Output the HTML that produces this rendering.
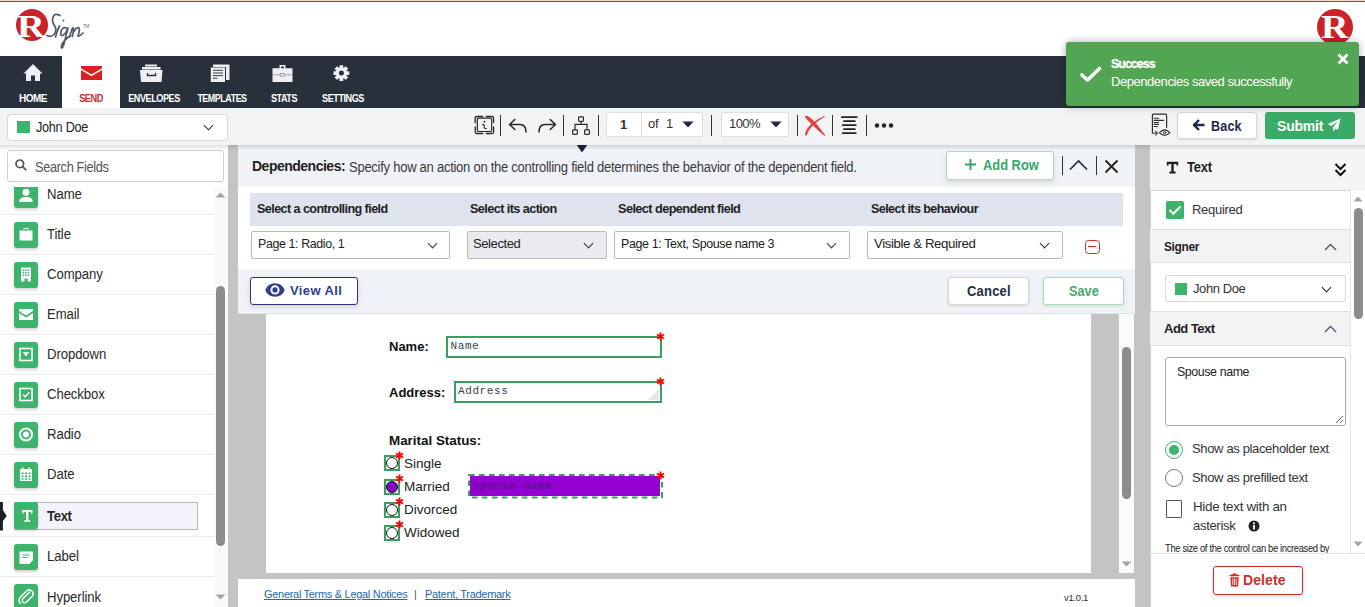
<!DOCTYPE html>
<html><head><meta charset="utf-8">
<style>
*{box-sizing:border-box;margin:0;padding:0}
html,body{width:1365px;height:607px;overflow:hidden;background:#fff;font-family:"Liberation Sans",sans-serif;color:#222}
.a{position:absolute}
.t{position:absolute;white-space:nowrap;line-height:1;transform-origin:0 0}
#nav{left:0;top:56px;width:1365px;height:52px;background:#28303b}
.nl{position:absolute;top:37.5px;color:#fff;font-size:10px;font-weight:bold;line-height:10px;white-space:nowrap;letter-spacing:-0.5px}
.sep{position:absolute;width:1px;background:#333;top:115px;height:21px}
.li{position:absolute;left:0;width:214px;height:40px;border-bottom:1px solid #ebebeb}
.li .ic{position:absolute;left:14px;top:7px;width:24px;height:26px;background:#3db36b;border-radius:3px;box-shadow:0 2px 3px rgba(0,0,0,.18)}
.li .ic svg{position:absolute;left:0;top:0}
.li .lb{position:absolute;left:47px;top:10.5px;font-size:14px;color:#2a2a2a;line-height:16px;letter-spacing:-0.1px;transform-origin:0 0;transform:scaleX(0.94);white-space:nowrap}
.sel{position:absolute;background:#fff;border:1px solid #b9b9b9;border-radius:2px}
.sel .tx{position:absolute;left:6px;top:5px;font-size:13px;color:#222;line-height:14px;white-space:nowrap;letter-spacing:-0.4px;transform-origin:0 0}
.chev{position:absolute;width:7px;height:7px;border-right:1.5px solid #333;border-bottom:1.5px solid #333;transform:rotate(45deg)}
.hdr{position:absolute;transform-origin:0 0;top:193px;height:33px;font-size:13px;font-weight:bold;color:#222;line-height:14px;padding-top:9px;white-space:nowrap;letter-spacing:-0.6px}
.btn{position:absolute;background:#fff;border-radius:3px;font-weight:bold;text-align:center;white-space:nowrap}
.ast{position:absolute;color:#f00;font-size:14px;font-weight:bold;line-height:10px;font-family:"Liberation Sans",sans-serif}
.rb{position:absolute;left:384px;width:16px;height:16px;border:2px solid #3c9f62}
.rb i{position:absolute;left:0px;top:0px;width:12px;height:12px;border:1.3px solid #111;border-radius:50%;background:#fff}
.rl{position:absolute;margin-top:-0.5px;left:404px;font-size:13px;color:#222;line-height:14px;font-family:"Liberation Sans",sans-serif;transform-origin:0 0;transform:scaleX(1.04)}
</style></head><body>
<div class="a" style="left:0;top:0;width:1365px;height:1px;background:#f4d3d3"></div>
<div class="a" style="left:0;top:1px;width:1365px;height:1px;background:#b23a3a"></div>
<!-- logo -->
<div class="a" style="left:16px;top:9px;width:32px;height:32px;border-radius:50%;background:#cc2229"></div>
<div class="t" id="logoR" style="left:17px;top:11px;font-family:'Liberation Serif',serif;font-weight:bold;font-size:31px;color:#fff;line-height:31px;transform:scaleX(1.24);transform-origin:0 0">R</div>
<svg class="a" style="left:0;top:0" width="100" height="55" viewBox="0 0 100 55" fill="none" stroke="#525b68" stroke-width="1.7" stroke-linecap="round" stroke-linejoin="round">
<path d="M60 15.5 Q55 12.5 53 17 Q51.5 21 54.5 25.5 Q57.5 30.5 54 34.5 Q51 37.5 47 35.5"/>
<path d="M55.5 37 Q57 31 59.5 26"/>
<circle cx="63.5" cy="20.5" r="0.9" fill="#525b68" stroke="none"/>
<path d="M66.5 28 Q62 26.5 60.8 32.5 Q60.3 37 63.5 35 Q66.5 32.5 68 28 L63.5 45.5 Q62 49.5 61.2 47 Q61.5 42 70.5 35.5"/>
<path d="M69.5 37 Q71 32 72.5 28 Q74 27.5 73.6 30 L72.3 36.5 M73.3 32.5 Q76.5 27 78.8 27.8 Q80 28.5 79 32 L78 36 Q79 37 83 33"/>
</svg>
<div class="t" style="left:83px;top:24.5px;font-size:4.5px;color:#666;letter-spacing:-0.2px">TM</div>
<div class="a" style="left:1317px;top:9px;width:36px;height:36px;border-radius:50%;background:#cc2229"></div>
<div class="t" style="left:1321px;top:12px;font-family:'Liberation Serif',serif;font-weight:bold;font-size:33px;color:#fff;line-height:31px;transform:scaleX(1.15)">R</div>

<div id="nav" class="a">
 <div class="a" style="left:62px;top:0;width:58px;height:52px;background:#fff"></div>
 <svg class="a" style="left:23px;top:8px" width="20" height="18" viewBox="0 0 20 18"><path d="M10 0 L0.5 9.5 H3 V17 H8 V11.5 H12 V17 H17 V9.5 H19.5 Z" fill="#eef0f4"/></svg>
 <svg class="a" style="left:81px;top:10px" width="21" height="14" viewBox="0 0 21 14"><path d="M0 0 H21 V2.2 L10.5 8.5 L0 2.2 Z M0 4 L10.5 10.3 L21 4 V14 H0 Z" fill="#d9211f"/></svg>
 <svg class="a" style="left:140px;top:8px" width="23" height="18" viewBox="0 0 23 18"><path d="M5 0.5 H17 V2.5 H5 Z M2 3 H20.5 V5.5 H2 Z M0 6 H22.5 L21.5 18 H1 Z" fill="#eef0f4"/><path d="M7.5 9 V11.5 H15.5 V9" stroke="#28303b" stroke-width="1.4" fill="none"/></svg>
 <svg class="a" style="left:210px;top:8px" width="20" height="18" viewBox="0 0 20 18"><path d="M3 0.5 H19.5 V16 H16 V3 H3 Z" fill="#eef0f4"/><path d="M0.8 3.5 H15 V18 H0.8 Z" fill="#eef0f4"/><path d="M3 6.3 H13 M3 9 H13 M3 11.6 H13 M3 14.2 H7.5" stroke="#28303b" stroke-width="0.9"/></svg>
 <svg class="a" style="left:272px;top:9px" width="21" height="17" viewBox="0 0 21 17"><path d="M7.5 0 H13.5 V3.3 H12 V1.5 H9 V3.3 H7.5 Z M0.5 3.3 H20.5 V17 H0.5 Z" fill="#eef0f4"/><path d="M0.5 9.8 H8.6 M12.4 9.8 H20.5" stroke="#8a9099" stroke-width="0.8"/><rect x="8.6" y="8.6" width="3.8" height="2.6" fill="none" stroke="#8a9099" stroke-width="0.8"/></svg>
 <svg class="a" style="left:333px;top:9px" width="17" height="17" viewBox="0 0 17 17"><g transform="translate(8.4 8.1)" fill="#eef0f4"><circle r="5.6"/><rect x="-1.9" y="-7.9" width="3.8" height="15.8" rx="0.6"/><rect x="-1.9" y="-7.9" width="3.8" height="15.8" rx="0.6" transform="rotate(45)"/><rect x="-1.9" y="-7.9" width="3.8" height="15.8" rx="0.6" transform="rotate(90)"/><rect x="-1.9" y="-7.9" width="3.8" height="15.8" rx="0.6" transform="rotate(135)"/></g><circle cx="8.4" cy="8.1" r="2.5" fill="#28303b"/></svg>
 <div class="nl" style="left:33px;transform:translateX(-50%) scaleX(1.0)">HOME</div>
 <div class="nl" style="left:90.6px;color:#c9302c;transform:translateX(-50%) scaleX(0.92)">SEND</div>
 <div class="nl" style="left:153.5px;transform:translateX(-50%) scaleX(0.91)">ENVELOPES</div>
 <div class="nl" style="left:221.7px;transform:translateX(-50%) scaleX(0.89)">TEMPLATES</div>
 <div class="nl" style="left:284.4px;transform:translateX(-50%) scaleX(0.9)">STATS</div>
 <div class="nl" style="left:343.2px;transform:translateX(-50%) scaleX(0.91)">SETTINGS</div>
</div>

<!-- toolbar -->
<div class="a" style="left:0;top:108px;width:1365px;height:37px;background:#f2f3f4"></div>
<div class="sel" style="left:7px;top:113.5px;width:221px;height:27px;border:1.5px solid #d8d8d8;border-radius:4px">
 <div class="a" style="left:9px;top:6.5px;width:13px;height:12px;background:#3db36b"></div>
 <div class="t" style="left:28px;top:5.5px;font-size:14px;color:#222;letter-spacing:-0.3px;transform:scaleX(0.905)">John Doe</div>
 <div class="chev" style="left:197px;top:7px"></div>
</div>

<!-- toolbar icons -->
<svg class="a" style="left:470px;top:112px" width="30" height="26" viewBox="0 0 30 26" fill="none" stroke="#262626" stroke-width="1.3" stroke-linecap="round"><path d="M5.2 10.7 V6 Q5.2 4.5 6.7 4.5 H12.7 M16.3 4.5 H22.1 Q23.6 4.5 23.6 6 V10.5 M5.2 14.8 V20 Q5.2 21.5 6.7 21.5 H12.7 M16.3 21.5 H22.1 Q23.6 21.5 23.6 20 V14.8"/><rect x="7.3" y="6.2" width="14.4" height="13.3" rx="1.6" stroke-width="1.2"/><circle cx="14.5" cy="9.7" r="0.9" fill="#262626" stroke="none"/><path d="M12.5 12.6 Q14.1 12.3 14.2 13.6 V15.4 Q14.4 16.8 16.4 16.5" stroke-width="1.1"/></svg>
<div class="sep" style="left:500px"></div>
<svg class="a" style="left:508px;top:118px" width="21" height="16" viewBox="0 0 21 16" fill="none" stroke="#2a2a2a" stroke-width="1.6" stroke-linecap="round" stroke-linejoin="round"><path d="M6.8 1.5 L1.5 6.5 L6.8 11.5 M1.5 6.5 H12 Q18 6.5 18 14"/></svg>
<svg class="a" style="left:537px;top:118px" width="21" height="16" viewBox="0 0 21 16" fill="none" stroke="#2a2a2a" stroke-width="1.6" stroke-linecap="round" stroke-linejoin="round"><path d="M13.2 1.5 L18.5 6.5 L13.2 11.5 M18.5 6.5 H8 Q2 6.5 2 14"/></svg>
<div class="sep" style="left:563px"></div>
<svg class="a" style="left:571px;top:115px" width="20" height="21" viewBox="0 0 20 21" fill="none" stroke="#2a2a2a" stroke-width="1.2"><rect x="7.6" y="1.8" width="4.8" height="4.6" rx="0.8"/><rect x="1.6" y="14.8" width="4.8" height="4.6" rx="0.8"/><rect x="13.6" y="14.8" width="4.8" height="4.6" rx="0.8"/><path d="M10 6.4 V9.3 M4 14.8 V9.3 H16 V14.8"/></svg>
<div class="sep" style="left:598px"></div>
<div class="a" style="left:606px;top:112px;width:97px;height:25px;background:#fff;border:1px solid #dedede;border-radius:2px"></div>
<div class="a" style="left:641px;top:113px;width:1px;height:23px;background:#dedede"></div>
<div class="t" style="left:620px;top:118px;font-size:13px;font-weight:bold;color:#333">1</div>
<div class="t" style="left:648px;top:117px;font-size:13px;color:#333;letter-spacing:-0.3px">of</div><div class="t" style="left:666px;top:117px;font-size:13px;color:#333">1</div>
<svg class="a" style="left:682px;top:121px" width="12" height="7" viewBox="0 0 12 7"><path d="M0.5 0.5 H11.5 L6 6.5 Z" fill="#1e2540"/></svg>
<div class="sep" style="left:711px"></div>
<div class="a" style="left:721px;top:112px;width:68px;height:25px;background:#fff;border:1px solid #dedede;border-radius:2px"></div>
<div class="t" style="left:729px;top:117px;font-size:13px;color:#333;letter-spacing:-0.6px">100%</div>
<svg class="a" style="left:770px;top:121px" width="12" height="7" viewBox="0 0 12 7"><path d="M0.5 0.5 H11.5 L6 6.5 Z" fill="#1e2540"/></svg>
<div class="sep" style="left:797px"></div>
<svg class="a" style="left:800px;top:110px" width="30" height="30" viewBox="0 0 30 30" fill="#e04545"><path d="M5 7.2 Q4.6 5.2 7.2 5.8 Q13 9 17.8 15.5 L25.3 25.3 L24.6 26 Q18 20.5 12.8 15.2 Q7.8 11 5 7.2 Z"/><path d="M24.6 5.8 Q25.3 6.4 24.2 7.1 Q17.5 11 12.5 16 Q8 21 7 25 Q5.8 26.8 5 24.6 Q5.6 19.5 10.8 14.5 Q16.8 9.3 24.6 5.8 Z"/></svg>
<div class="sep" style="left:832px"></div>
<svg class="a" style="left:840px;top:115px" width="18" height="20" viewBox="0 0 18 20" stroke="#222" stroke-width="1.7" stroke-linecap="round"><path d="M1.8 2.2 H16.8 M4 6.2 H14.8 M2.8 10.2 H15.8 M4 14.2 H14.8 M2.8 18.2 H15.8"/></svg>
<div class="sep" style="left:866px"></div>
<svg class="a" style="left:874px;top:122px" width="20" height="7" viewBox="0 0 20 7" fill="#222"><circle cx="3" cy="3.5" r="2.2"/><circle cx="10" cy="3.5" r="2.2"/><circle cx="17" cy="3.5" r="2.2"/></svg>

<!-- right toolbar -->
<svg class="a" style="left:1150px;top:112px" width="24" height="26" viewBox="0 0 24 26" fill="none" stroke="#2e2e2e" stroke-width="1.2" stroke-linecap="round"><path d="M2.4 21.2 V3.5 Q2.4 2.2 3.7 2.2 H15.3 Q16.6 2.2 16.6 3.5 V15.4"/><path d="M2.4 21.2 H7.3 M5.6 19.3 L7.6 21.2 L5.6 23.1" stroke="#555"/><path d="M4.2 6.3 H8.6 M4.2 8.4 H13.6 M4.2 10.5 H8.6 M4.2 12.4 H8.6 M4.2 14.5 H7.3" stroke-width="1.1"/><path d="M9.4 20.7 Q14.6 15 19.8 20.7 Q14.6 26.4 9.4 20.7 Z" stroke-width="1.1"/><circle cx="14.6" cy="20.7" r="1.2" stroke-width="1"/></svg>
<div class="btn" style="left:1177px;top:112px;width:80px;height:27px;border:1px solid #d6d6d6;box-shadow:0 1px 2px rgba(0,0,0,.1)"></div>
<svg class="a" style="left:1193px;top:119px" width="12" height="12" viewBox="0 0 12 12"><path d="M6 1 L1 6 L6 11 M1.5 6 H11.5" stroke="#1e2a45" stroke-width="2.4" fill="none"/></svg>
<div class="t" style="left:1211px;top:117px;font-size:15px;font-weight:bold;color:#1e2a45;letter-spacing:0.2px;transform:scaleX(0.84);margin-top:0.5px">Back</div>
<div class="btn" style="left:1265px;top:112px;width:90px;height:27px;background:#3aab67"></div>
<div class="t" style="left:1277px;top:118px;font-size:14px;font-weight:bold;color:#fff;letter-spacing:-0.2px;margin-top:1px">Submit</div>
<svg class="a" style="left:1327px;top:118px" width="14" height="14" viewBox="0 0 14 14"><path d="M13.5 0.5 L0.5 6 L4.5 8 L11 3 L6 9.5 L6 13.5 L8.5 10.5 L11 12 Z" fill="#fff"/></svg>

<!-- left panel -->
<div class="a" style="left:0;top:145px;width:228px;height:462px;background:#fff"></div>
<div class="a" style="left:7px;top:150px;width:217px;height:32px;border:1px solid #cfcfcf;border-radius:3px;background:#fff"></div>
<svg class="a" style="left:15px;top:159px" width="12" height="12" viewBox="0 0 12 12" fill="none" stroke="#555" stroke-width="1.7"><circle cx="4.8" cy="4.8" r="3.8"/><path d="M7.6 7.6 L11.2 11.2"/></svg>
<div class="t" style="left:35px;top:159.5px;font-size:14px;color:#555;letter-spacing:-0.4px;transform:scaleX(0.915)">Search Fields</div>
<div class="a" style="left:0;top:187px;width:228px;height:420px;overflow:hidden">
 <div class="a" style="left:0;top:-12px;width:228px;height:450px">
  <div class="li" style="top:0"><div class="ic"><svg width="24" height="25" viewBox="0 0 24 25" fill="#fff"><circle cx="12" cy="10.3" r="3.5"/><path d="M5.2 20 Q5.2 15 12 15 Q18.8 15 18.8 20 Z"/></svg></div><div class="lb">Name</div></div>
  <div class="li" style="top:40px"><div class="ic"><svg width="24" height="25" viewBox="0 0 24 25" fill="#fff"><path d="M9.5 7.5 V6 H14.5 V7.5 H13.5 V7 H10.5 V7.5 Z M5.5 8.5 H18.5 V18.5 H5.5 Z"/></svg></div><div class="lb">Title</div></div>
  <div class="li" style="top:80px"><div class="ic"><svg width="24" height="25" viewBox="0 0 24 25" fill="#fff"><path d="M7 5.5 H17 V19.5 H13.5 V16.5 H10.5 V19.5 H7 Z"/><g fill="#3db36b"><rect x="8.7" y="7.5" width="1.5" height="1.5"/><rect x="11.2" y="7.5" width="1.5" height="1.5"/><rect x="13.7" y="7.5" width="1.5" height="1.5"/><rect x="8.7" y="10" width="1.5" height="1.5"/><rect x="11.2" y="10" width="1.5" height="1.5"/><rect x="13.7" y="10" width="1.5" height="1.5"/><rect x="8.7" y="12.5" width="1.5" height="1.5"/><rect x="11.2" y="12.5" width="1.5" height="1.5"/><rect x="13.7" y="12.5" width="1.5" height="1.5"/></g></svg></div><div class="lb">Company</div></div>
  <div class="li" style="top:120px"><div class="ic"><svg width="24" height="25" viewBox="0 0 24 25" fill="#fff"><path d="M5 7 H19 V9 L12 13.5 L5 9 Z M5 11 L12 15.5 L19 11 V18 H5 Z"/></svg></div><div class="lb">Email</div></div>
  <div class="li" style="top:160px"><div class="ic"><svg width="24" height="25" viewBox="0 0 24 25" fill="none" stroke="#fff" stroke-width="1.6"><rect x="6" y="6.5" width="12" height="12"/><path d="M9.5 10.5 H14.5 L12 14 Z" fill="#fff" stroke-width="0.8"/></svg></div><div class="lb">Dropdown</div></div>
  <div class="li" style="top:200px"><div class="ic"><svg width="24" height="25" viewBox="0 0 24 25" fill="none" stroke="#fff" stroke-width="1.6"><rect x="6" y="6.5" width="12" height="12"/><path d="M9 12.5 L11.3 14.8 L15.2 10.2"/></svg></div><div class="lb">Checkbox</div></div>
  <div class="li" style="top:240px"><div class="ic"><svg width="24" height="25" viewBox="0 0 24 25"><circle cx="12" cy="12.5" r="6" fill="none" stroke="#fff" stroke-width="2"/><circle cx="12" cy="12.5" r="3" fill="#fff"/></svg></div><div class="lb">Radio</div></div>
  <div class="li" style="top:280px"><div class="ic"><svg width="24" height="25" viewBox="0 0 24 25" fill="#fff"><path d="M6 7 H18 V19 H6 Z"/><g fill="#3db36b"><rect x="7.5" y="10.5" width="2" height="1.7"/><rect x="11" y="10.5" width="2" height="1.7"/><rect x="14.5" y="10.5" width="2" height="1.7"/><rect x="7.5" y="13.5" width="2" height="1.7"/><rect x="11" y="13.5" width="2" height="1.7"/><rect x="14.5" y="13.5" width="2" height="1.7"/><rect x="7.5" y="16.3" width="2" height="1.5"/><rect x="11" y="16.3" width="2" height="1.5"/><rect x="14.5" y="16.3" width="2" height="1.5"/></g><rect x="8" y="5.5" width="1.5" height="2.5"/><rect x="14.5" y="5.5" width="1.5" height="2.5"/></svg></div><div class="lb">Date</div></div>
  <div class="li" style="top:320px;height:42px">
   <div class="a" style="left:14px;top:7px;width:184px;height:28px;background:#f3f4fb;border:1px solid #b9b9b9"></div>
   <svg class="a" style="left:0;top:7px" width="8" height="29" viewBox="0 0 8 29"><path d="M0 0 H2.9 V8 L6.7 14 L2.9 19 V28.6 H0 Z" fill="#1c1f26"/></svg>
   <div class="ic" style="top:7px;height:27px"><svg width="24" height="27" viewBox="0 0 24 27"><path d="M8 8 H18.5 V11.5 H17 V9.8 H14.4 V18.3 H16.2 V19.8 H10.3 V18.3 H12.1 V9.8 H9.5 V11.5 H8 Z" fill="#fff"/></svg></div><div class="lb" style="font-weight:bold;top:13px;letter-spacing:-0.4px">Text</div></div>
  <div class="li" style="top:362px;height:40px"><div class="ic" style="top:7px"><svg width="24" height="26" viewBox="0 0 24 26" fill="#fff"><path d="M5.5 7.5 H19 V16 L15.5 20 H6.5 Q5.5 20 5.5 19 Z"/><path d="M8.5 11 H16 M8.5 13.5 H13.5" stroke="#3db36b" stroke-width="1.1"/></svg></div><div class="lb" style="top:11px">Label</div></div>
  <div class="li" style="top:402px"><div class="ic" style="top:7px"><svg width="24" height="25" viewBox="0 0 24 25" fill="none" stroke="#fff" stroke-width="1.5" stroke-linecap="round"><path d="M15.5 8 L9 14.5 Q7.5 16.5 9 18 Q10.5 19.5 12.5 18 L18 12.5 Q20.5 9.5 18 7 Q15.5 4.5 12.5 7 L6.5 13 Q3.5 16.5 6.5 19.5"/></svg></div><div class="lb" style="top:11.5px">Hyperlink</div></div>
 </div>
</div>
<div class="a" style="left:214px;top:187px;width:14px;height:420px;background:#fafafa"></div>
<svg class="a" style="left:215px;top:192px" width="11" height="6" viewBox="0 0 11 6"><path d="M0.5 5.5 L5.5 0.5 L10.5 5.5 Z" fill="#a3a3a3"/></svg>
<div class="a" style="left:216px;top:286px;width:9px;height:260px;background:#8c8c8c;border-radius:5px"></div>
<svg class="a" style="left:215px;top:594px" width="11" height="6" viewBox="0 0 11 6"><path d="M0.5 0.5 L10.5 0.5 L5.5 5.5 Z" fill="#a3a3a3"/></svg>

<!-- center gray -->
<div class="a" style="left:228px;top:145px;width:922px;height:462px;background:#c4c4c4"></div>
<!-- dependencies panel -->
<div class="a" style="left:238px;top:145px;width:897px;height:169px;background:#eff3f7;border-bottom:1px solid #dfe3ea"></div>
<svg class="a" style="left:576px;top:145px" width="12" height="8" viewBox="0 0 12 8"><path d="M0.8 0 H11.2 L6 7.6 Z" fill="#17203d"/></svg>
<div class="t" style="left:252px;top:159px;font-size:14px;font-weight:bold;color:#222;letter-spacing:-0.5px">Dependencies:</div>
<div class="t" style="left:349px;top:159.5px;font-size:14px;color:#3a3a3a;letter-spacing:-0.28px;transform:scaleX(0.929)">Specify how an action on the controlling field determines the behavior of the dependent field.</div>
<div class="btn" style="left:946px;top:151px;width:108px;height:29px;border:1px solid #a9dbbd;box-shadow:0 2px 4px rgba(0,0,0,.12)"></div>
<svg class="a" style="left:964px;top:158px" width="13" height="13" viewBox="0 0 13 13"><path d="M6.5 1 V12 M1 6.5 H12" stroke="#3aa76d" stroke-width="2"/></svg>
<div class="t" style="left:983px;top:158px;font-size:14px;font-weight:bold;color:#3aa76d;letter-spacing:0px;transform:scaleX(0.92)">Add Row</div>
<div class="a" style="left:1062px;top:156px;width:1px;height:19px;background:#333"></div>
<svg class="a" style="left:1069px;top:159px" width="19" height="12" viewBox="0 0 19 12"><path d="M1 10.5 L9.5 2 L18 10.5" stroke="#1e2a45" stroke-width="1.6" fill="none"/></svg>
<div class="a" style="left:1096px;top:156px;width:1px;height:19px;background:#333"></div>
<svg class="a" style="left:1104px;top:159px" width="15" height="15" viewBox="0 0 15 15"><path d="M1.5 1.5 L13.5 13.5 M13.5 1.5 L1.5 13.5" stroke="#222" stroke-width="1.8"/></svg>
<div class="a" style="left:238px;top:187px;width:897px;height:82px;background:#fff"></div>
<div class="a" style="left:250px;top:193px;width:873px;height:33px;background:#dfe3ee"></div>
<div class="hdr" style="left:257px;transform:scaleX(0.97)">Select a controlling field</div>
<div class="hdr" style="left:470px;transform:scaleX(0.975)">Select its action</div>
<div class="hdr" style="left:618px;transform:scaleX(0.98)">Select dependent field</div>
<div class="hdr" style="left:871px;transform:scaleX(0.965)">Select its behaviour</div>
<div class="sel" style="left:251px;top:231px;width:199px;height:28px"><div class="tx" style="transform:scaleX(0.955)">Page 1: Radio, 1</div><div class="chev" style="left:177px;top:8px"></div></div>
<div class="sel" style="left:467px;top:231px;width:140px;height:28px;background:#e9ebee"><div class="tx" style="left:5px">Selected</div><div class="chev" style="left:117px;top:8px"></div></div>
<div class="sel" style="left:614px;top:231px;width:236px;height:28px"><div class="tx" style="transform:scaleX(0.96)">Page 1: Text, Spouse name 3</div><div class="chev" style="left:213px;top:8px"></div></div>
<div class="sel" style="left:867px;top:231px;width:196px;height:28px"><div class="tx" style="transform:scaleX(1.02)">Visible &amp; Required</div><div class="chev" style="left:173px;top:8px"></div></div>
<div class="a" style="left:1085px;top:240px;width:15px;height:14px;border:1.6px solid #c9302c;border-radius:3.5px"><div class="a" style="left:2.2px;top:4.6px;width:7.4px;height:1.8px;background:#c9302c"></div></div>
<div class="btn" style="left:250px;top:277px;width:108px;height:28px;border:1.5px solid #2b3577;box-shadow:0 2px 5px rgba(0,0,0,.12)"></div>
<svg class="a" style="left:265.3px;top:283px" width="20" height="14" viewBox="0 0 20 14"><path d="M0.3 7 Q2.8 0.2 10 0.2 Q17.2 0.2 19.7 7 Q17.2 13.8 10 13.8 Q2.8 13.8 0.3 7 Z" fill="#2f3d8f"/><circle cx="10" cy="6.9" r="4.6" fill="#fff"/><circle cx="10" cy="6.9" r="2.6" fill="#2f3d8f"/></svg>
<div class="t" style="left:290px;top:283.5px;font-size:13px;font-weight:bold;color:#2f3d8f;letter-spacing:0.4px">View All</div>
<div class="btn" style="left:948px;top:277px;width:81px;height:28px;border:1px solid #d6d6d6;box-shadow:0 1px 3px rgba(0,0,0,.12)"></div>
<div class="t" style="left:967px;top:284px;font-size:14px;font-weight:bold;color:#263046;letter-spacing:0.2px;transform:scaleX(0.93)">Cancel</div>
<div class="btn" style="left:1043px;top:277px;width:81px;height:28px;border:1px solid #a9dbbd;box-shadow:0 1px 3px rgba(0,0,0,.12)"></div>
<div class="t" style="left:1069px;top:284px;font-size:14px;font-weight:bold;color:#4aa872;letter-spacing:0px;transform:scaleX(0.91)">Save</div>

<!-- document page -->
<div class="a" style="left:266px;top:314px;width:825px;height:259px;background:#fff"></div>
<div class="a" style="left:1119px;top:314px;width:15px;height:259px;background:#fbfbfb"></div>
<div class="a" style="left:1122px;top:347px;width:9px;height:152px;background:#8c8c8c;border-radius:5px"></div>
<svg class="a" style="left:1121px;top:561px" width="11" height="6" viewBox="0 0 11 6"><path d="M0.5 0.5 L10.5 0.5 L5.5 5.5 Z" fill="#a3a3a3"/></svg>

<div class="t" style="left:389px;top:340px;font-size:13px;font-weight:bold;color:#111">Name:</div>
<div class="a" style="left:446px;top:336px;width:216px;height:22px;border:2.2px solid #3c9f62"></div>
<div class="t" style="left:450.5px;top:341px;font-family:'Liberation Mono',monospace;font-size:11px;color:#3a3f4a;letter-spacing:0.6px">Name</div>
<svg class="a" style="left:656.2px;top:332.1px" width="9" height="9" viewBox="0 0 9 9"><path d="M4.5 0.5 V8.5 M1 2.5 L8 6.5 M8 2.5 L1 6.5" stroke="#f00" stroke-width="1.9"/></svg>
<div class="t" style="left:389px;top:386px;font-size:13px;font-weight:bold;color:#111">Address:</div>
<div class="a" style="left:454px;top:381px;width:208px;height:22px;border:2.2px solid #3c9f62"></div>
<div class="a" style="left:648px;top:389px;width:0;height:0;border-left:11px solid transparent;border-bottom:11px solid #e6e6e6"></div>
<div class="t" style="left:458px;top:385.5px;font-family:'Liberation Mono',monospace;font-size:11px;color:#3a3f4a;letter-spacing:0.6px">Address</div>
<svg class="a" style="left:656.2px;top:377.0px" width="9" height="9" viewBox="0 0 9 9"><path d="M4.5 0.5 V8.5 M1 2.5 L8 6.5 M8 2.5 L1 6.5" stroke="#f00" stroke-width="1.9"/></svg>
<div class="t" style="left:389px;top:433.5px;font-size:13px;font-weight:bold;color:#111;transform:scaleX(1.03)">Marital Status:</div>
<div class="rb" style="top:455px"><i></i></div><svg class="a" style="left:394.8px;top:450.8px" width="9" height="9" viewBox="0 0 9 9"><path d="M4.5 0.5 V8.5 M1 2.5 L8 6.5 M8 2.5 L1 6.5" stroke="#f00" stroke-width="1.9"/></svg><div class="rl" style="top:457px">Single</div>
<div class="rb" style="top:478.5px"><i style="background:#8a00c8"></i></div><svg class="a" style="left:394.8px;top:474.3px" width="9" height="9" viewBox="0 0 9 9"><path d="M4.5 0.5 V8.5 M1 2.5 L8 6.5 M8 2.5 L1 6.5" stroke="#f00" stroke-width="1.9"/></svg><div class="rl" style="top:480.5px">Married</div>
<div class="rb" style="top:501.5px"><i></i></div><svg class="a" style="left:394.8px;top:497.3px" width="9" height="9" viewBox="0 0 9 9"><path d="M4.5 0.5 V8.5 M1 2.5 L8 6.5 M8 2.5 L1 6.5" stroke="#f00" stroke-width="1.9"/></svg><div class="rl" style="top:503.5px">Divorced</div>
<div class="rb" style="top:524.5px"><i></i></div><svg class="a" style="left:394.8px;top:520.3px" width="9" height="9" viewBox="0 0 9 9"><path d="M4.5 0.5 V8.5 M1 2.5 L8 6.5 M8 2.5 L1 6.5" stroke="#f00" stroke-width="1.9"/></svg><div class="rl" style="top:526.5px">Widowed</div>
<div class="a" style="left:470px;top:476px;width:190px;height:20px;background:#9400d3"></div>
<svg class="a" style="left:467px;top:473px" width="197" height="26" viewBox="0 0 197 26"><rect x="2" y="2" width="193" height="22.5" fill="none" stroke="#3c9f62" stroke-width="2" stroke-dasharray="5.6 4.4"/></svg>
<div class="t" style="left:472.5px;top:480.5px;font-family:'Liberation Mono',monospace;font-size:11px;color:#4b1a78;letter-spacing:0.6px">Spouse name</div>
<svg class="a" style="left:656.2px;top:470.5px" width="9" height="9" viewBox="0 0 9 9"><path d="M4.5 0.5 V8.5 M1 2.5 L8 6.5 M8 2.5 L1 6.5" stroke="#f00" stroke-width="1.9"/></svg>

<!-- footer -->
<div class="a" style="left:238px;top:579px;width:897px;height:28px;background:#fff"></div>
<div class="t" style="left:264px;top:589px;font-size:11px;color:#2b66ab;text-decoration:underline;letter-spacing:-0.3px">General Terms &amp; Legal Notices</div>
<div class="t" style="left:414px;top:589px;font-size:11px;color:#555">|</div>
<div class="t" style="left:425px;top:589px;font-size:11px;color:#2b66ab;text-decoration:underline;letter-spacing:-0.3px">Patent, Trademark</div>
<div class="t" style="left:1064px;top:592.5px;font-size:9.5px;color:#333;letter-spacing:-0.3px">v1.0.1</div>

<!-- right panel -->
<div class="a" style="left:1150px;top:145px;width:215px;height:462px;background:#fff;border-left:1px solid #cfcfcf"></div>
<div class="a" style="left:1150px;top:145px;width:215px;height:46px;background:#f5f5f6;border-bottom:1px solid #d9d9d9"></div>
<svg class="a" style="left:1166px;top:161px" width="13" height="13" viewBox="0 0 13 13"><path d="M0.8 0.8 H12.2 V4.4 H10.4 V2.9 H7.7 V10.6 H9.6 V12.4 H3.4 V10.6 H5.3 V2.9 H2.6 V4.4 H0.8 Z" fill="#1e1e1e"/></svg>
<div class="t" style="left:1187px;top:160px;font-size:14px;font-weight:bold;color:#222;letter-spacing:-0.3px;transform:scaleX(0.93)">Text</div>
<svg class="a" style="left:1334px;top:162px" width="13" height="15" viewBox="0 0 13 15"><path d="M1.5 2 L6.5 7 L11.5 2 M1.5 8 L6.5 13 L11.5 8" stroke="#111" stroke-width="2" fill="none"/></svg>
<div class="a" style="left:1350px;top:190px;width:15px;height:363px;background:#fff;border-left:1px solid #e5e5e5"></div>
<svg class="a" style="left:1353px;top:196px" width="10" height="6" viewBox="0 0 10 6"><path d="M0.5 5.5 L5 0.5 L9.5 5.5 Z" fill="#a3a3a3"/></svg>
<div class="a" style="left:1354px;top:208px;width:9px;height:111px;background:#8c8c8c;border-radius:5px"></div>
<svg class="a" style="left:1353px;top:541px" width="10" height="6" viewBox="0 0 10 6"><path d="M0.5 0.5 L9.5 0.5 L5 5.5 Z" fill="#a3a3a3"/></svg>
<div class="a" style="left:1166px;top:201px;width:18px;height:18px;background:#3db36b;border-radius:2px"></div>
<svg class="a" style="left:1166px;top:201px" width="18" height="18" viewBox="0 0 18 18"><path d="M3.5 9 L7.3 12.8 L14.5 5.5" stroke="#fff" stroke-width="2.2" fill="none"/></svg>
<div class="t" style="left:1192px;top:203px;font-size:13px;color:#333;letter-spacing:-0.3px">Required</div>
<div class="a" style="left:1150px;top:229px;width:200px;height:34px;background:#f2f3f5;border-top:1px solid #dedede;border-bottom:1px solid #dedede"></div>
<div class="t" style="left:1164px;top:240px;font-size:13px;font-weight:bold;color:#222;letter-spacing:-0.4px;transform:scaleX(0.92)">Signer</div>
<svg class="a" style="left:1324px;top:243px" width="13" height="8" viewBox="0 0 13 8"><path d="M1 7 L6.5 1.5 L12 7" stroke="#4a5468" stroke-width="1.3" fill="none"/></svg>
<div class="sel" style="left:1165px;top:275px;width:181px;height:27px;border-color:#d8d8d8"></div>
<div class="a" style="left:1175px;top:283px;width:12px;height:12px;background:#3db36b"></div>
<div class="t" style="left:1193px;top:282px;font-size:13px;color:#333;letter-spacing:-0.4px">John Doe</div>
<div class="chev" style="left:1323px;top:283.5px;width:7px;height:7px;border-color:#222;border-width:1.7px"></div>
<div class="a" style="left:1150px;top:311px;width:200px;height:35px;background:#f2f3f5;border-top:1px solid #dedede;border-bottom:1px solid #dedede"></div>
<div class="t" style="left:1164px;top:322px;font-size:13px;font-weight:bold;color:#222;letter-spacing:-0.5px">Add Text</div>
<svg class="a" style="left:1324px;top:325px" width="13" height="8" viewBox="0 0 13 8"><path d="M1 7 L6.5 1.5 L12 7" stroke="#4a5468" stroke-width="1.3" fill="none"/></svg>
<div class="a" style="left:1165px;top:357px;width:181px;height:69px;border:1px solid #a9a9a9;border-radius:3px;background:#fff"></div>
<div class="t" style="left:1177px;top:365px;font-size:13px;color:#222;letter-spacing:-0.4px;transform:scaleX(0.95)">Spouse name</div>
<svg class="a" style="left:1335px;top:415px" width="9" height="9" viewBox="0 0 9 9"><path d="M8 1 L1 8 M8 5 L5 8" stroke="#555" stroke-width="0.9"/></svg>
<div class="a" style="left:1165px;top:441px;width:18px;height:18px;border:1px solid #3db36b;border-radius:50%"><div class="a" style="left:3px;top:3px;width:10px;height:10px;background:#3db36b;border-radius:50%"></div></div>
<div class="t" style="left:1192px;top:442px;font-size:13px;color:#333;letter-spacing:-0.35px">Show as placeholder text</div>
<div class="a" style="left:1165px;top:469px;width:18px;height:18px;border:1px solid #777;border-radius:50%"></div>
<div class="t" style="left:1192px;top:471px;font-size:13px;color:#333;letter-spacing:-0.35px">Show as prefilled text</div>
<div class="a" style="left:1166px;top:500px;width:16px;height:18px;border:1px solid #555;border-radius:1px"></div>
<div class="t" style="left:1193px;top:500px;font-size:13px;color:#333;letter-spacing:-0.3px;transform:scaleX(1.03)">Hide text with an</div>
<div class="t" style="left:1193px;top:519px;font-size:13px;color:#333;letter-spacing:-0.3px">asterisk</div>
<svg class="a" style="left:1248px;top:520px" width="12" height="12" viewBox="0 0 12 12"><circle cx="6" cy="6" r="5.5" fill="#222"/><rect x="5.1" y="5" width="1.8" height="4.5" fill="#fff"/><circle cx="6" cy="3.3" r="1" fill="#fff"/></svg>
<div class="a" style="left:1150px;top:540px;width:200px;height:13.5px;overflow:hidden"><div class="t" style="left:15px;top:4px;font-size:10px;color:#222;letter-spacing:-0.35px;transform:scaleX(0.935)">The size of the control can be increased by</div></div>
<div class="a" style="left:1150px;top:553px;width:215px;height:1px;background:#e5e5e5"></div>
<div class="btn" style="left:1213px;top:566px;width:90px;height:29px;border:1px solid #c9302c;box-shadow:0 1px 4px rgba(0,0,0,.15)"></div>
<svg class="a" style="left:1229px;top:573px" width="11" height="14" viewBox="0 0 11 14" fill="#c9302c"><path d="M3.5 0.5 H7.5 V1.8 H10.5 V3.3 H0.5 V1.8 H3.5 Z M1.3 4.2 H9.7 L9 13.5 H2 Z"/><path d="M3.8 5.5 V12 M5.5 5.5 V12 M7.2 5.5 V12" stroke="#fff" stroke-width="0.8"/></svg>
<div class="t" style="left:1243px;top:573px;font-size:14px;font-weight:bold;color:#c9302c;letter-spacing:0.1px">Delete</div>

<div class="a" style="left:0;top:145px;width:1365px;height:5px;background:linear-gradient(rgba(0,0,0,.13),rgba(0,0,0,0))"></div>
<!-- toast -->
<div class="a" style="left:1066px;top:42px;width:293px;height:64px;background:#52a552;border-radius:3px;box-shadow:0 0 8px rgba(0,0,0,.3)"></div>
<svg class="a" style="left:1079px;top:64px" width="24" height="19" viewBox="0 0 24 19"><path d="M3 11 L8.5 16 L20.5 4.5" stroke="#fff" stroke-width="3.6" stroke-linecap="round" stroke-linejoin="round" fill="none"/></svg>
<div class="t" style="left:1111px;top:57px;font-size:13px;font-weight:bold;color:#fff;letter-spacing:-0.9px;transform:scaleX(0.94);-webkit-text-stroke:0.35px #fff">Success</div>
<div class="t" style="left:1111px;top:75px;font-size:13px;color:#fff;letter-spacing:-0.45px">Dependencies saved successfully</div>
<svg class="a" style="left:1337px;top:53px" width="12" height="12" viewBox="0 0 12 12"><path d="M1.5 1.5 L10.5 10.5 M10.5 1.5 L1.5 10.5" stroke="#fff" stroke-width="2.8"/></svg>
</body></html>
